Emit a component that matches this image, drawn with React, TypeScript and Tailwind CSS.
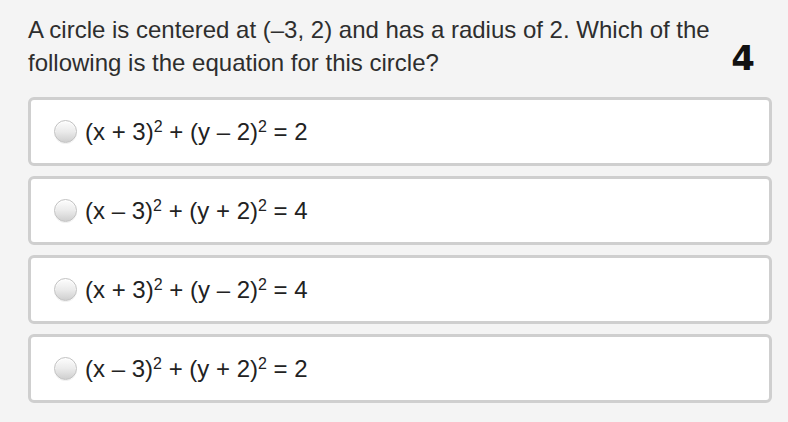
import React from "react";

const font = { fontFamily: '"Liberation Sans", Arial, Helvetica, sans-serif' };

function Sup({ children }: { children: React.ReactNode }) {
  return (
    <span className="text-[16px] leading-none align-[0.5em]">{children}</span>
  );
}

type Opt = { a: string; b: string; c: string; r: string };

const options: Opt[] = [
  { a: "+", b: "3", c: "–", r: "2" },
  { a: "–", b: "3", c: "+", r: "4" },
  { a: "+", b: "3", c: "–", r: "4" },
  { a: "–", b: "3", c: "+", r: "2" },
];

function Radio() {
  return (
    <div className="w-[23px] h-[23px] rounded-full border border-[#c2c2c2] bg-linear-to-b from-[#fdfdfd] via-[#ebebeb] to-[#cfcfcf] shadow-[inset_0_1px_1px_rgba(255,255,255,0.9),0_1px_0_rgba(0,0,0,0.05)] shrink-0" />
  );
}

export default function App() {
  return (
    <div className="w-[788px] h-[422px] bg-[#f4f4f4] pl-[28px] pr-[16px] pt-[13px] overflow-hidden" style={font}>
      <div className="flex items-start">
        <p className="flex-1 text-[24px] leading-[33px] text-[#2e2e2e]">
          A circle is centered at (–3, 2) and has a radius of 2. Which of the following is the equation for this circle?
        </p>
        <div
          className="mt-[28px] mr-[17px] ml-[10px] text-[34px] leading-[34px] font-bold text-[#111]"
          style={{ fontFamily: '"DejaVu Sans", sans-serif' }}
        >
          4
        </div>
      </div>
      <div className="mt-[18px] flex flex-col gap-[10px]">
        {options.map((o, i) => (
          <div
            key={i}
            className="h-[69px] bg-white border-[3px] border-[#cfcfcf] rounded-[6px] flex items-center pl-[23px] gap-[8px]"
          >
            <Radio />
            <span className="text-[24px] text-[#222] whitespace-pre">
              (x {o.a} {o.b})<Sup>2</Sup> + (y {o.c} 2)<Sup>2</Sup> = {o.r}
            </span>
          </div>
        ))}
      </div>
    </div>
  );
}
